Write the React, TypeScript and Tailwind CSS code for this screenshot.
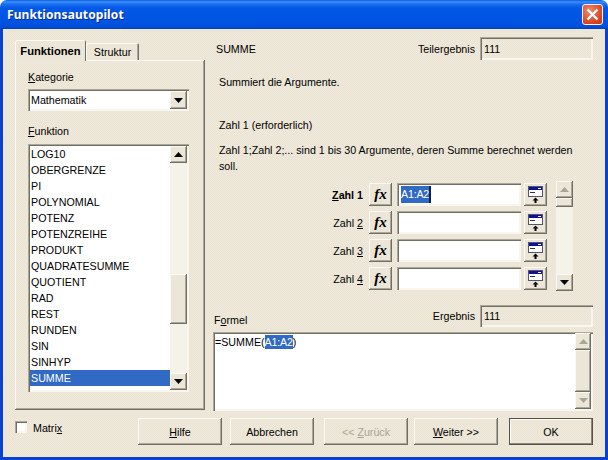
const raised = "shadow-[inset_-1px_-1px_0_#716f64,inset_1px_1px_0_#fbf9f2,inset_-2px_-2px_0_#aca899]";
const sunken = "shadow-[inset_1px_1px_0_#aca899,inset_2px_2px_0_#716f64,inset_-1px_-1px_0_#f8f6ee,inset_-2px_-2px_0_#f8f6ee]";
const items = ["LOG10","OBERGRENZE","PI","POLYNOMIAL","POTENZ","POTENZREIHE","PRODUKT","QUADRATESUMME","QUOTIENT","RAD","REST","RUNDEN","SIN","SINHYP","SUMME","SUMMEWENN"];

function Arrow({ up, disabled }: { up?: boolean; disabled?: boolean }) {
  return (
    <svg width="9" height="5" viewBox="0 0 9 5">
      <polygon points={up ? "0,5 9,5 4.5,0" : "0,0 9,0 4.5,5"} fill={disabled ? "#a8a596" : "#000"} />
    </svg>
  );
}

function ScrollBtn({ up, disabled }: { up?: boolean; disabled?: boolean }) {
  return (
    <div className={`h-[17px] w-full shrink-0 flex items-center justify-center bg-[#ece6d8] ${raised}`}>
      <Arrow up={up} disabled={disabled} />
    </div>
  );
}

function RefIcon() {
  return (
    <svg width="15" height="17" viewBox="0 0 15 17">
      <rect x="0.5" y="0.5" width="14" height="10" fill="#fff" stroke="#55556a" />
      <rect x="1" y="1" width="13" height="3" fill="#10109c" />
      <rect x="10" y="2" width="3" height="1" fill="#fff" />
      <rect x="2" y="6" width="5" height="1" fill="#333" />
      <path d="M7.5 11.5 L4.5 14.5 H6.5 V17 H8.5 V14.5 H10.5 Z" fill="#000" />
    </svg>
  );
}

function ArgRow({ label, active, value }: { label: React.ReactNode; active?: boolean; value?: boolean }) {
  return (
    <div className="flex items-center h-[23px]">
      <div className={`w-[150px] text-right ${active ? "font-bold" : ""}`}>{label}</div>
      <div className={`ml-[6px] w-[23px] h-[23px] flex items-center justify-center bg-[#ece6d8] ${raised}`}>
        <span className="font-['Liberation_Serif',serif] italic font-bold text-[15px] leading-none">fx</span>
      </div>
      <div className={`ml-[5px] w-[124px] h-[23px] bg-white pl-[4px] pt-[3px] ${sunken}`}>
        {value && (
          <span className="inline-flex h-[17px] items-center">
            <span className="bg-[#316ac5] text-white h-[17px] leading-[17px] tracking-[-0.2px]">A1:A2</span>
            <span className="bg-[#0a2460] h-[17px] w-[2px]" />
          </span>
        )}
      </div>
      <div className={`ml-[3px] w-[23px] h-[23px] flex items-center justify-center bg-[#ece6d8] ${raised}`}>
        <RefIcon />
      </div>
    </div>
  );
}

function Btn({ children, className = "", disabled, primary }: { children: React.ReactNode; className?: string; disabled?: boolean; primary?: boolean }) {
  return (
    <div className={`w-[84px] h-[27px] flex items-center justify-center ${primary ? "shadow-[inset_0_0_0_1px_#55534a,inset_-2px_-2px_0_#8b887a,inset_2px_2px_0_#fbf9f2]" : raised} ${disabled ? "text-[#a8a596]" : ""} ${className}`}>
      {children}
    </div>
  );
}

export default function App() {
  return (
    <div className="w-[608px] h-[460px] bg-white overflow-hidden flex flex-col font-['Liberation_Sans',sans-serif] text-[10.7px] leading-[14px] text-black">
      <div className="h-[29px] shrink-0 rounded-t-[7px] flex items-center justify-between pl-[7px] pr-[5px] bg-[linear-gradient(to_bottom,#0a5be0_0px,#3d90f8_2px,#1a6ff0_4px,#0358e6_8px,#0054e3_20px,#0250dc_26px,#0042c0_29px)]">
        <span className="font-['Noto_Sans',sans-serif] font-bold text-[12px] tracking-[0.1px] text-white [text-shadow:1px_1px_0_#0a2f9c]">Funktionsautopilot</span>
        <div className="w-[21px] h-[21px] rounded-[3px] border border-[#f2f2f2] bg-[radial-gradient(circle_at_35%_30%,#ee8a6a,#d9431f_70%,#c23a1a)] flex items-center justify-center">
          <svg width="13" height="13" viewBox="0 0 13 13">
            <path d="M1.5 1.5 L11.5 11.5 M11.5 1.5 L1.5 11.5" stroke="#fff" strokeWidth="2.4" />
          </svg>
        </div>
      </div>

      <div className="flex-1 flex flex-col border-x-[3px] border-b-[3px] border-[#0a42d0] bg-[#ede7da] bg-[repeating-conic-gradient(#efe9dc_0_25%,#ebe4d5_0_50%)] bg-[length:2px_2px] px-[12px] pt-[8px]">
        <div className="flex gap-[8px] h-[374px]">
          <div className="w-[190px] mt-[2px] h-[371px] flex flex-col">
            <div className="flex items-end h-[21px] relative">
              <div className="w-[71px] h-[21px] -mb-[1px] z-10 flex items-center justify-center font-bold text-[11.2px] bg-[#ece6d8] shadow-[inset_1px_1px_0_#fbf9f2,inset_-1px_0_0_#716f64] rounded-t-[2px]">Funktionen</div>
              <div className="w-[53px] h-[17px] flex items-center justify-center shadow-[inset_1px_1px_0_#fbf9f2,inset_-1px_0_0_#716f64,inset_-2px_0_0_#aca899] rounded-t-[2px]">Struktur</div>
            </div>
            <div className={`h-[350px] pl-[13px] pr-[16px] ${raised}`}>
              <div className="pt-[10px] h-[29px]"><u>K</u>ategorie</div>
              <div className={`h-[22px] bg-white flex items-center justify-between pl-[3px] pr-[2px] ${sunken}`}>
                <span>Mathematik</span>
                <div className={`w-[17px] h-[18px] flex items-center justify-center bg-[#ece6d8] ${raised}`}><Arrow /></div>
              </div>
              <div className="mt-[13px] h-[20px]"><u>F</u>unktion</div>
              <div className={`h-[248px] bg-white flex p-[2px] ${sunken}`}>
                <div className="w-[140px] overflow-hidden">
                  {items.map((it) => (
                    <div key={it} className={`h-[16px] leading-[16px] pl-[1px] ${it === "SUMME" ? "bg-[#316ac5] text-white" : ""}`}>{it}</div>
                  ))}
                </div>
                <div className="w-[17px] flex flex-col bg-[#f5f2e9]">
                  <ScrollBtn up />
                  <div className="h-[112px]" />
                  <div className={`h-[50px] bg-[#ece6d8] ${raised}`} />
                  <div className="h-[49px]" />
                  <ScrollBtn />
                </div>
              </div>
            </div>
          </div>

          <div className="w-[381px] flex flex-col">
            <div className="h-[23px] flex items-center justify-between">
              <span className="pl-[3px]">SUMME</span>
              <div className="flex items-center gap-[5px]">
                <span>Teilergebnis</span>
                <div className={`w-[113px] h-[23px] pl-[4px] flex items-center ${sunken}`}>111</div>
              </div>
            </div>
            <div className="mt-[15px] pl-[6px]">Summiert die Argumente.</div>
            <div className="mt-[29px] pl-[6px]">Zahl 1 (erforderlich)</div>
            <div className="mt-[10px] pl-[6px] leading-[16px] h-[32px] whitespace-nowrap">Zahl 1;Zahl 2;... sind 1 bis 30 Argumente, deren Summe berechnet werden<br />soll.</div>
            <div className="mt-[7px] h-[110px] flex">
              <div className="pt-[2px] flex flex-col gap-[5px] w-[334px]">
                <ArgRow active value label={<><u>Z</u>ahl 1</>} />
                <ArgRow label={<>Zahl <u>2</u></>} />
                <ArgRow label={<>Zahl <u>3</u></>} />
                <ArgRow label={<>Zahl <u>4</u></>} />
              </div>
              <div className="ml-[9px] w-[17px] flex flex-col bg-[#f5f2e9]">
                <ScrollBtn up disabled />
                <div className={`h-[9px] ${raised} bg-[#ece6d8]`} />
                <div className="flex-1" />
                <ScrollBtn />
              </div>
            </div>
            <div className="mt-[14px] h-[22px] flex items-end justify-between">
              <span className="pl-[1px]">F<u>o</u>rmel</span>
              <div className="flex items-center gap-[5px]">
                <span>Ergebnis</span>
                <div className={`w-[113px] h-[22px] pl-[4px] flex items-center ${sunken}`}>111</div>
              </div>
            </div>
            <div className={`mt-[5px] h-[79px] w-[380px] bg-white flex justify-between pl-[2px] pr-[2px] pt-[1px] pb-[2px] ${sunken}`}>
              <div className="pt-[2px] h-[17px] flex">
                <span>=SUMME(</span>
                <span className="bg-[#316ac5] text-white h-[14px] tracking-[-0.2px]">A1:A2</span>
                <span>)</span>
              </div>
              <div className="w-[16px] flex flex-col bg-[#f5f2e9]">
                <ScrollBtn up disabled />
                <div className={`h-[42px] ${raised} bg-[#ece6d8]`} />
                <ScrollBtn disabled />
              </div>
            </div>
          </div>
        </div>

        <div className="flex mt-[7px] h-[27px]">
          <div className="w-[123px] flex items-start gap-[6px] pt-[3px]">
            <div className={`w-[12px] h-[12px] bg-white ${sunken}`} />
            <span>Matri<u>x</u></span>
          </div>
          <Btn><span><u>H</u>ilfe</span></Btn>
          <Btn className="ml-[8px]">Abbrechen</Btn>
          <Btn className="ml-[10px]" disabled><span>&lt;&lt; <u>Z</u>urück</span></Btn>
          <Btn className="ml-[6px]"><span><u>W</u>eiter &gt;&gt;</span></Btn>
          <Btn className="ml-[11px]" primary>OK</Btn>
        </div>
      </div>
    </div>
  );
}
